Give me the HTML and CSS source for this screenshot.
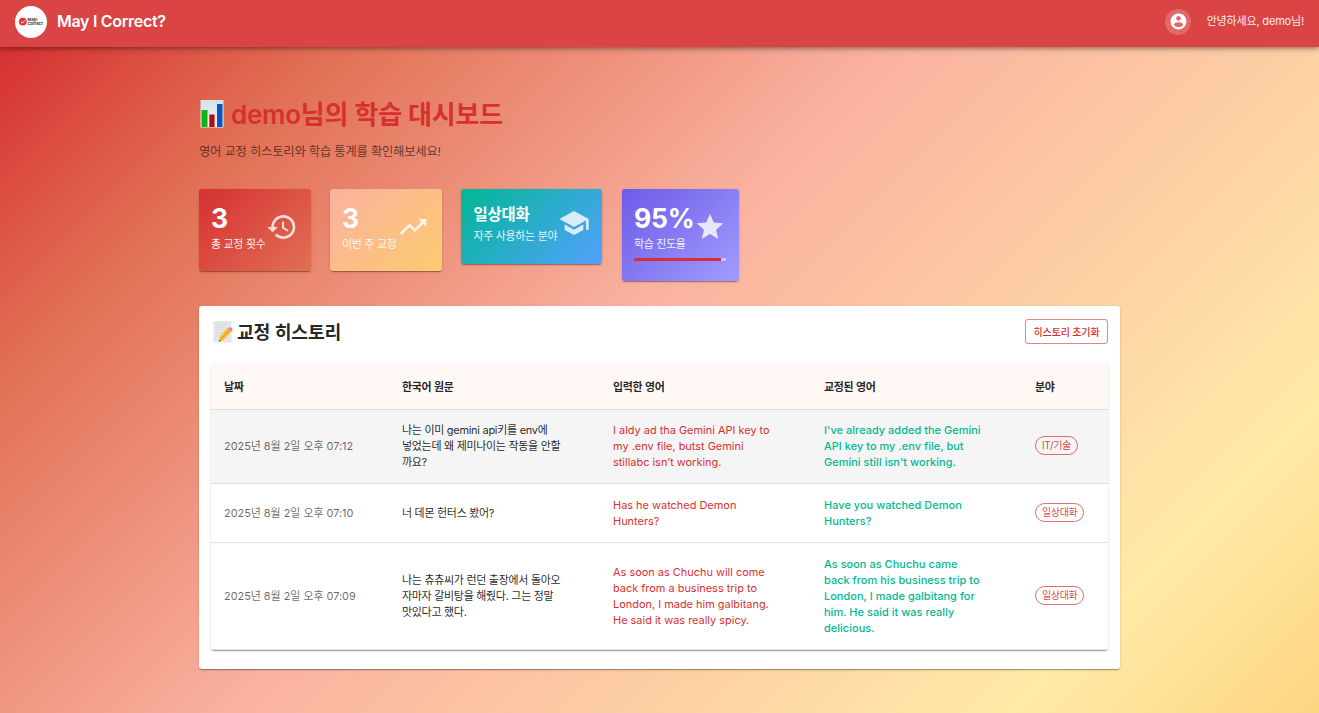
FILE: index.html
```html
<!DOCTYPE html>
<html lang="ko">
<head>
<meta charset="utf-8">
<title>May I Correct?</title>
<link rel="stylesheet" href="styles.css">
</head>
<body>
<header class="appbar">
  <svg class="logo" viewBox="0 0 32 32">
    <circle cx="16" cy="16" r="16" fill="#fff"/>
    <circle cx="7.8" cy="15.6" r="3.9" fill="#e53238"/>
    <path d="M5.9 15.7l1.4 1.4 2.5-2.8" fill="none" stroke="#fff" stroke-width="1"/>
    <text x="12.6" y="15.2" class="logo-text">MayI</text>
    <text x="12.6" y="18.9" class="logo-text">Correct</text>
  </svg>
  <h1 class="brand">May I Correct?</h1>
  <div class="avatar"><svg viewBox="0 0 24 24"><path d="M12 2C6.48 2 2 6.48 2 12s4.480 10 10 10 10-4.480 10-10S17.520 2 12 2zm0 3c1.660 0 3 1.340 3 3s-1.340 3-3 3-3-1.340-3-3 1.340-3 3-3zm0 14.200c-2.500 0-4.710-1.280-6-3.220.03-1.990 4-3.080 6-3.080 1.990 0 5.970 1.090 6 3.080-1.290 1.940-3.500 3.220-6 3.220z"/></svg></div>
  <span class="greeting">안녕하세요, demo님!</span>
</header>
<main class="container">
  <h2 class="title">
    <svg class="chart-emoji" viewBox="0 0 24 28">
      <defs><linearGradient id="sheet" x2="0" y2="1"><stop stop-color="#d4e1ec"/><stop offset="1" stop-color="#f2f3f5"/></linearGradient></defs>
      <path fill="url(#sheet)" d="M.5 0h23v27.500H.5z"/>
      <path fill="#07b917" d="M1.500 10h6v17h-6z"/><path fill="#b30c12" d="M9.300 14.500h5.300V27H9.300z"/><path fill="#0957c3" d="M17 4h5.500v23H17z"/>
    </svg><span>demo님의 학습 대시보드</span>
  </h2>
  <p class="subtitle">영어 교정 히스토리와 학습 통계를 확인해보세요!</p>
  <section class="stats">
    <div class="stat stat-total">
      <div class="stat-row">
        <div><div class="stat-value">3</div><div class="stat-label">총 교정 횟수</div></div>
        <svg viewBox="0 0 24 24"><path d="M13 3c-4.970 0-9 4.030-9 9H1l3.890 3.890.07.14L9 12H6c0-3.870 3.130-7 7-7s7 3.130 7 7-3.130 7-7 7c-1.930 0-3.680-.79-4.940-2.060l-1.420 1.420C8.270 19.990 10.510 21 13 21c4.970 0 9-4.030 9-9s-4.030-9-9-9zm-1 5v5l4.280 2.540.72-1.210-3.500-2.080V8H12z"/></svg>
      </div>
    </div>
    <div class="stat stat-week">
      <div class="stat-row">
        <div><div class="stat-value">3</div><div class="stat-label">이번 주 교정</div></div>
        <svg viewBox="0 0 24 24"><path d="M16 6l2.290 2.290-4.880 4.880-4-4L2 16.590 3.410 18l6-6 4 4 6.300-6.290L22 12V6z"/></svg>
      </div>
    </div>
    <div class="stat stat-field">
      <div class="stat-row">
        <div><div class="stat-name">일상대화</div><div class="stat-label">자주 사용하는 분야</div></div>
        <svg viewBox="0 0 24 24"><path d="M5 13.180v4L12 21l7-3.820v-4L12 17l-7-3.820zM12 3L1 9l11 6 9-4.910V17h2V9L12 3z"/></svg>
      </div>
    </div>
    <div class="stat stat-progress">
      <div class="stat-row">
        <div><div class="stat-value">95%</div><div class="stat-label">학습 진도율</div></div>
        <svg viewBox="0 0 24 24"><path d="M12 17.270L18.180 21l-1.640-7.030L22 9.240l-7.190-.61L12 2 9.190 8.630 2 9.240l5.460 4.730L5.820 21z"/></svg>
      </div>
      <div class="bar"><div class="bar-fill" style="width:95%"></div></div>
    </div>
  </section>
  <section class="history">
    <div class="history-head">
      <h3>
        <svg class="memo-emoji" viewBox="0 0 20 22">
          <path fill="#e5e6e8" d="M.5 0H18.500v21.500H.5z"/>
          <path d="M2.500 3h13M2.500 6h12M2.500 9h10M2.500 12h7M2.500 15h4" stroke="#cfd1d3" stroke-width=".8" stroke-dasharray="2 .6"/>
          <path fill="#f8bf2d" d="M14.200 7.300l4 3.800-8 8.100-4.300 1.500.9-4.900z"/>
          <path stroke="#dc951d" d="M16.400 9.200l-8 8.300"/>
          <path fill="#ef7f86" d="M14.700 7.500l1.200-1.200q1.800-.5 3.200 1.100.8 1.300.3 2.200l-1.100 1.100z"/>
          <path fill="#555" d="M6.500 18.500l-.6 2.200 2-.7z"/>
        </svg><span>교정 히스토리</span>
      </h3>
      <button class="reset">히스토리 초기화</button>
    </div>
    <div class="table-wrap">
      <table>
        <colgroup><col class="c-date"><col class="c-text"><col class="c-text"><col class="c-text"><col></colgroup>
        <thead><tr><th>날짜</th><th>한국어 원문</th><th>입력한 영어</th><th>교정된 영어</th><th>분야</th></tr></thead>
        <tbody>
          <tr class="hovered"><td class="date">2025년 8월 2일 오후 07:12</td><td class="source">나는 이미 gemini api키를 env에<br>넣었는데 왜 제미나이는 작동을 안할<br>까요?</td><td class="wrong">I aldy ad tha Gemini API key to<br>my .env file, butst Gemini<br>stillabc isn’t working.</td><td class="right">I've already added the Gemini<br>API key to my .env file, but<br>Gemini still isn't working.</td><td><span class="chip">IT/기술</span></td></tr>
          <tr><td class="date">2025년 8월 2일 오후 07:10</td><td class="source">너 데몬 헌터스 봤어?</td><td class="wrong">Has he watched Demon<br>Hunters?</td><td class="right">Have you watched Demon<br>Hunters?</td><td><span class="chip">일상대화</span></td></tr>
          <tr><td class="date">2025년 8월 2일 오후 07:09</td><td class="source">나는 츄츄씨가 런던 출장에서 돌아오<br>자마자 갈비탕을 해줬다. 그는 정말<br>맛있다고 했다.</td><td class="wrong">As soon as Chuchu will come<br>back from a business trip to<br>London, I made him galbitang.<br>He said it was really spicy.</td><td class="right">As soon as Chuchu came<br>back from his business trip to<br>London, I made galbitang for<br>him. He said it was really<br>delicious.</td><td><span class="chip">일상대화</span></td></tr>
        </tbody>
      </table>
    </div>
  </section>
</main>
</body>
</html>
```
FILE: styles.css
```css
* { box-sizing: border-box; }
body {
  margin: 0;
  min-height: 713px;
  font-family: Inter, "Noto Sans CJK KR", sans-serif;
  color: rgba(0, 0, 0, .87);
  background: linear-gradient(135deg, #d63031 2.3%, #e17055 18.700%, #fab1a0 46%, #ffeaa7 84.800%, #fdcb6e 107%);
  overflow: hidden;
}
h1, h2, h3, p { margin: 0; }
.appbar {
  height: 47px;
  padding: 0 15px 4px;
  display: flex;
  align-items: center;
  background: #da4445;
  color: #fff;
  box-shadow: 0 2px 3px -1px rgba(0, 0, 0, .2), 0 3px 4px rgba(0, 0, 0, .14), 0 1px 8px rgba(0, 0, 0, .12);
}
.logo { width: 32px; height: 32px; margin-right: 10px; }
.logo-text { font: 700 4.100px Inter, sans-serif; fill: #333; }
.brand { padding-bottom: 1px; font-size: 16px; line-height: 26px; font-weight: 600; letter-spacing: -.29px; }
.avatar {
  width: 26px; height: 26px;
  margin-left: auto;
  border-radius: 50%;
  display: flex; align-items: center; justify-content: center;
  background: rgba(255, 255, 255, .2);
}
.avatar svg { width: 19px; height: 19px; margin-left: 1px; fill: #fff; }
.greeting { margin-left: 16px; padding-bottom: 1px; font-size: 11px; line-height: 16px; letter-spacing: -.17px; opacity: .9; white-space: nowrap; }
.container { width: 921px; margin: 0 auto; padding-top: 48px; }
.title { display: flex; align-items: center; height: 38px; gap: 7px; font-size: 26px; font-weight: 600; line-height: 38px; letter-spacing: -.25px; color: #d63031; white-space: nowrap; }
.title span { padding-top: 2px; }
.chart-emoji { width: 24px; height: 28px; margin-left: 1px; }
.subtitle { margin-top: 9px; font-size: 12.300px; line-height: 19px; letter-spacing: -.2px; color: rgba(0, 0, 0, .6); }
.stats { display: flex; align-items: flex-start; gap: 19px; margin-top: 28px; height: 117px; }
.stat {
  padding: 13px 12.500px;
  border-radius: 3px;
  color: #fff;
  box-shadow: 0 2px 1px -1px rgba(0, 0, 0, .2), 0 1px 1px rgba(0, 0, 0, .14), 0 1px 3px rgba(0, 0, 0, .12);
}
.stat-row { display: flex; align-items: center; justify-content: space-between; white-space: nowrap; }
.stat-row svg { width: 32px; height: 32px; flex: none; fill: #fff; opacity: .8; }
.stat-value { font-size: 26.500px; font-weight: 700; line-height: 33px; }
.stat-name { font-size: 15.400px; font-weight: 600; line-height: 25px; letter-spacing: -.15px; }
.stat-label { position: relative; top: 1px; font-size: 10.900px; line-height: 16px; letter-spacing: -.26px; opacity: .9; }
.stat-total { width: 112px; height: 82px; background: linear-gradient(135deg, #d63031, #e17055); }
.stat-week { width: 112px; height: 82px; background: linear-gradient(135deg, #fab1a0, #fdcb6e); }
.stat-total, .stat-week { padding-right: 13px; padding-left: 12px; }
.stat-field { width: 141px; height: 74.500px; margin-right: 1px; background: linear-gradient(135deg, #00b894, #54a0ff); }
.stat-progress { width: 117px; height: 92px; padding: 13px 13px 13px 12px; background: linear-gradient(135deg, #6c5ce7, #a29bfe); }
.stat-progress .stat-value { letter-spacing: -.2px; }
.bar { height: 3px; margin-top: 7px; background: rgba(255, 255, 255, .45); }
.bar-fill { height: 3px; background: #d63031; }
.history {
  height: 363px;
  padding: 12px;
  background: #fff;
  border-radius: 3px;
  box-shadow: 0 2px 1px -1px rgba(0, 0, 0, .2), 0 1px 1px rgba(0, 0, 0, .14), 0 1px 3px rgba(0, 0, 0, .12);
}
.history-head { display: flex; justify-content: space-between; align-items: center; height: 27px; }
.history-head h3 { display: flex; align-items: center; gap: 4px; padding-left: 2px; font-size: 18.300px; line-height: 27px; font-weight: 600; letter-spacing: -.2px; }
.history-head h3 span { padding-top: 1px; }
.memo-emoji { width: 20px; height: 22px; }
.reset { width: 83px; height: 25px; padding: 0; border: 1px solid rgba(214, 48, 49, .6); border-radius: 3px; background: none; color: #d63031; font: 500 10px Inter, "Noto Sans CJK KR", sans-serif; letter-spacing: -.15px; }
.table-wrap {
  height: 287px;
  margin-top: 18px;
  border-radius: 3px;
  overflow: hidden;
  box-shadow: 0 2px 1px -1px rgba(0, 0, 0, .2), 0 1px 1px rgba(0, 0, 0, .14), 0 1px 3px rgba(0, 0, 0, .12);
}
table { width: 100%; border-collapse: separate; border-spacing: 0; table-layout: fixed; font-size: 10.950px; line-height: 16px; }
.c-date { width: 178px; }
.c-text { width: 211px; }
th, td { padding: 0 13px; text-align: left; vertical-align: middle; border-bottom: 1px solid #e0e0e0; white-space: nowrap; }
th { height: 47px; padding-top: 1px; background: #fff8f5; font-weight: 600; letter-spacing: -.25px; }
td { height: 59px; }
.hovered td { height: 74px; padding-bottom: 1px; background: #f5f5f5; }
tr:last-child td { height: 107px; }
.date { color: rgba(0, 0, 0, .6); letter-spacing: -.03px; }
.source { letter-spacing: -.26px; }
.wrong { color: #d63031; }
.right { color: #00b894; font-weight: 500; letter-spacing: .04px; }
.chip { display: inline-block; height: 19px; margin-bottom: 1px; padding: 0 6px; border: 1px solid rgba(214, 48, 49, .7); border-radius: 10px; color: rgba(214, 48, 49, .9); font-size: 10px; line-height: 17px; letter-spacing: -.35px; vertical-align: middle; }
```
